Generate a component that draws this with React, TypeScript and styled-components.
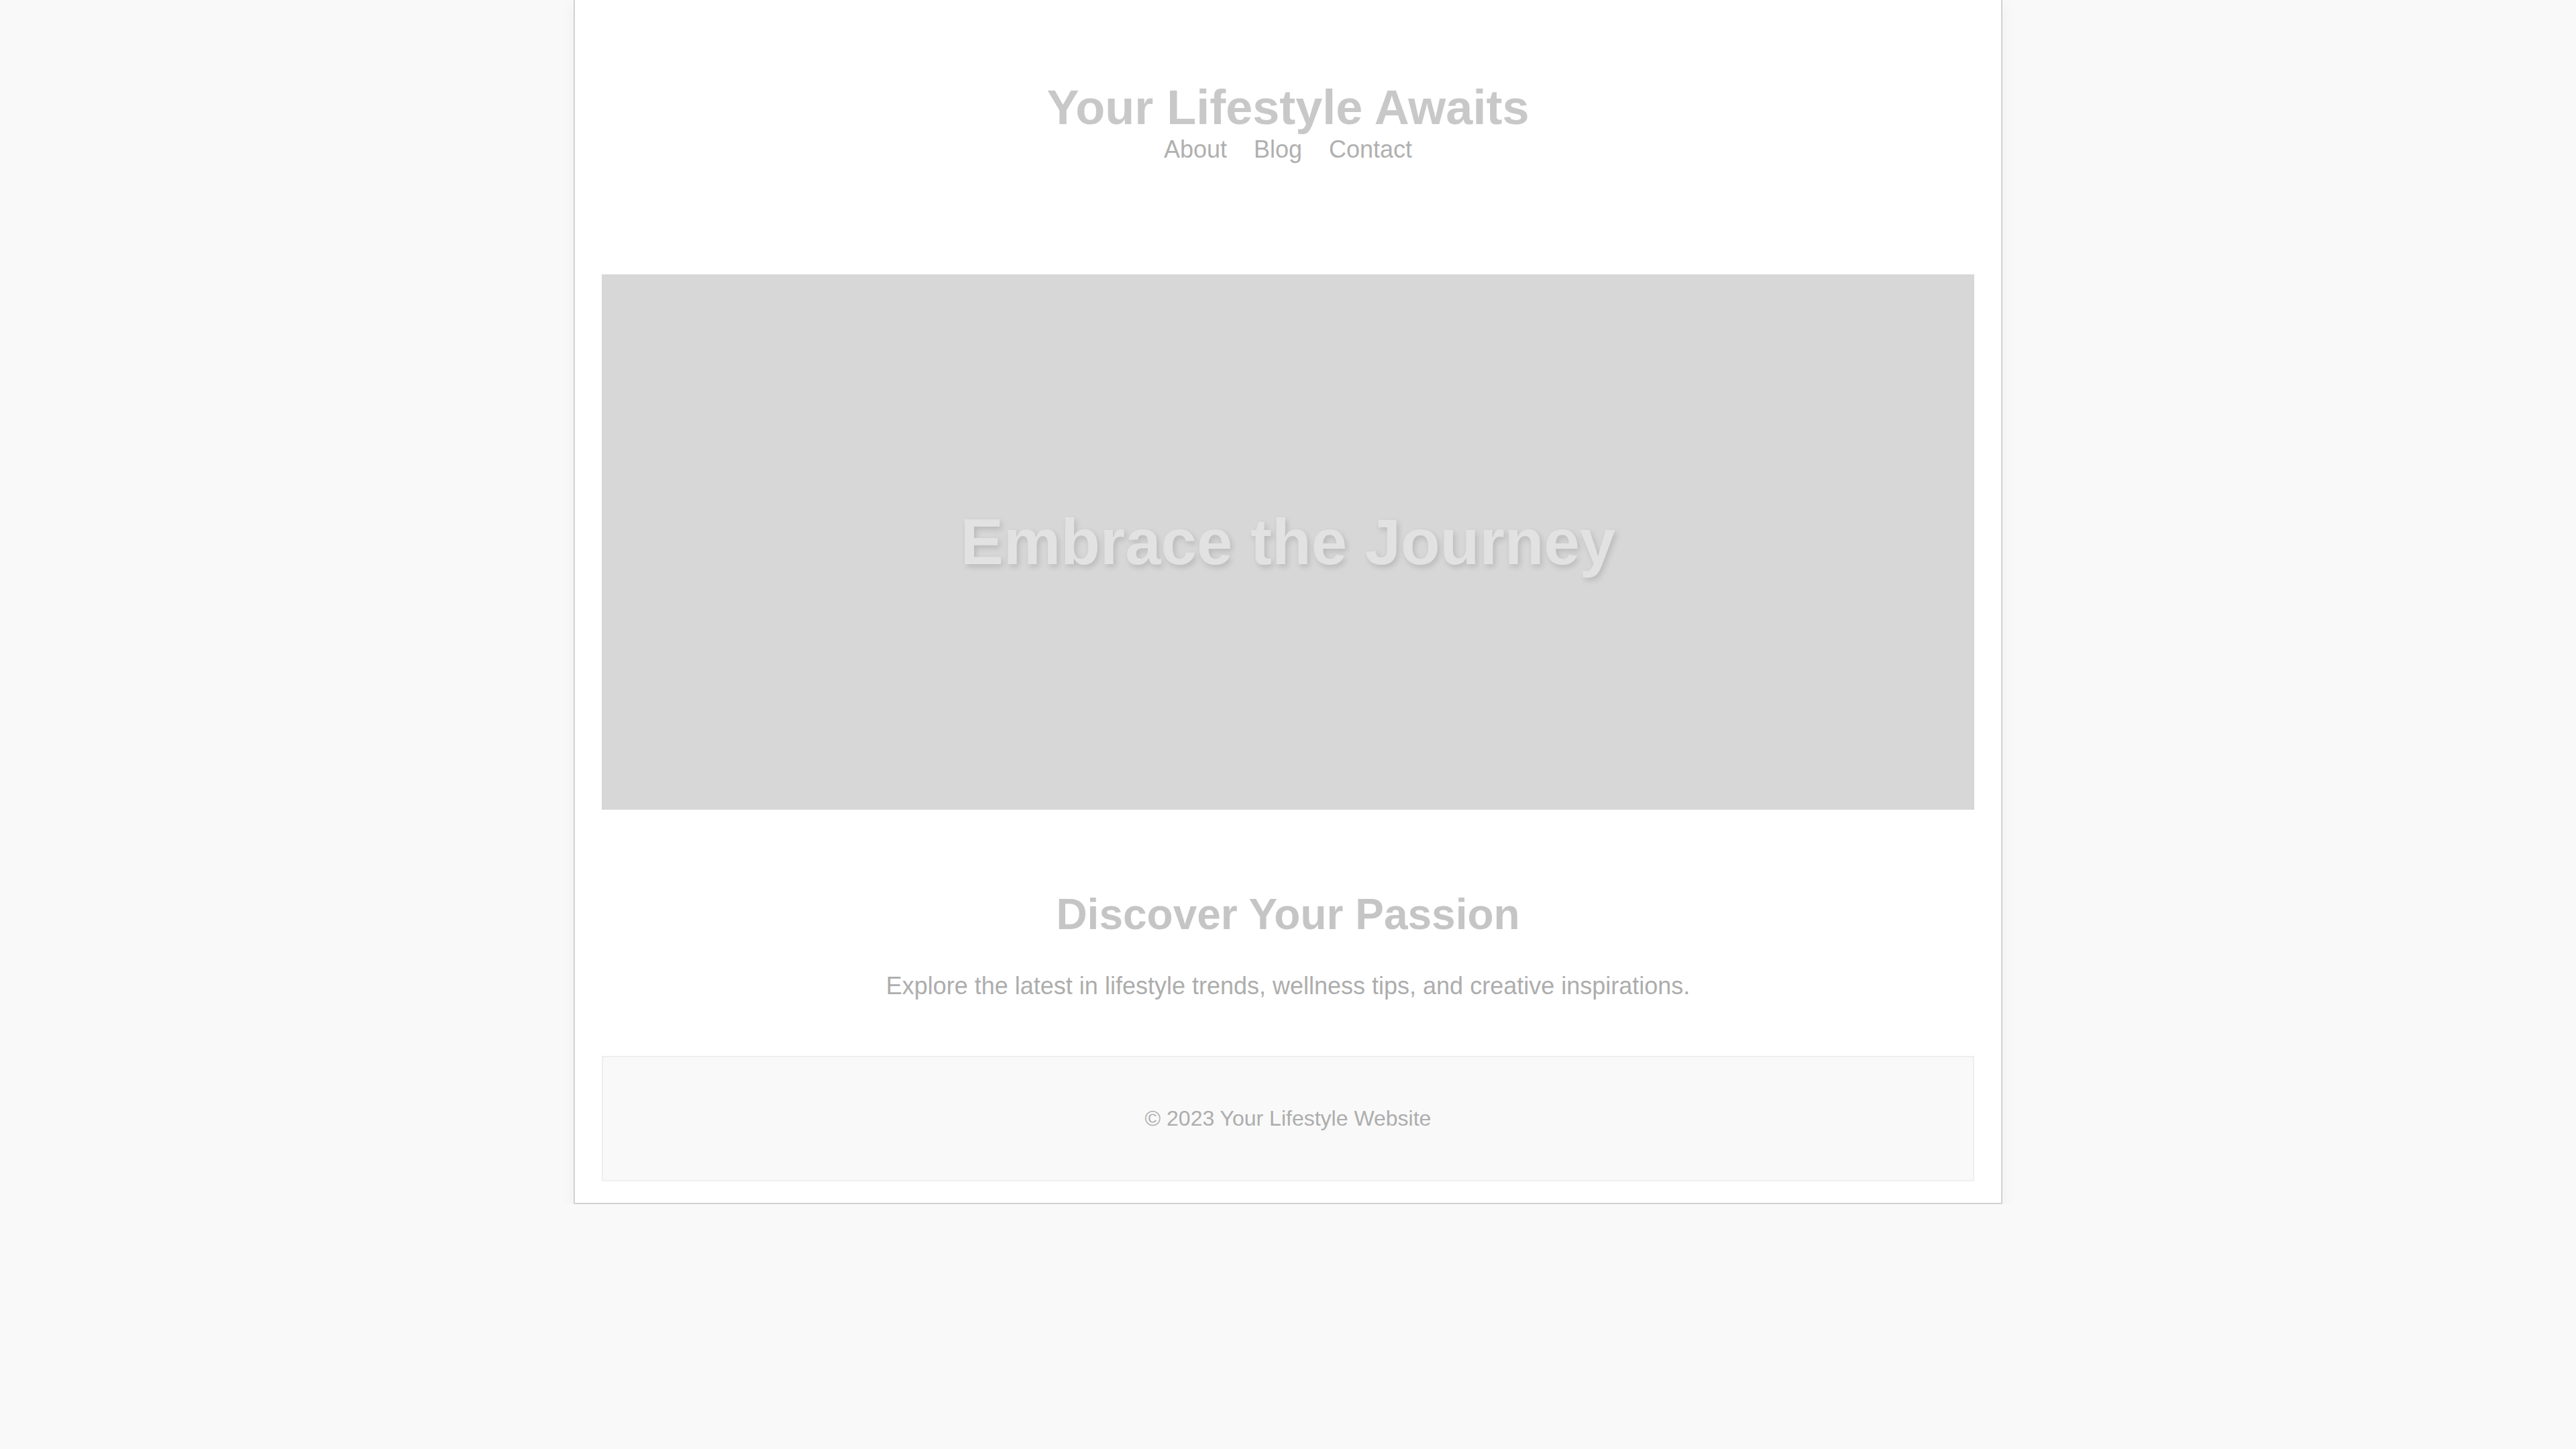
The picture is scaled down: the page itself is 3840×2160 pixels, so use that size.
import React from "react";
import styled, { createGlobalStyle } from "styled-components";

const GlobalStyle = createGlobalStyle`
  html, body {
    margin: 0;
    padding: 0;
    background: #f9f9f9;
    font-family: "Liberation Sans", Arial, sans-serif;
  }
  * { box-sizing: border-box; }
`;

const Page = styled.div`
  width: 2130px;
  margin: 0 auto;
  background: #ffffff;
  border: 2px solid #d2d2d2;
  border-top: none;
  box-shadow: 0 6px 24px rgba(0, 0, 0, 0.05);
  padding: 0 40px 32px;
`;

const Header = styled.header`
  display: flex;
  flex-direction: column;
  align-items: center;
  padding-top: 119px;
  margin-bottom: 166px;
`;

const Title = styled.h1`
  margin: 0;
  font-size: 72px;
  line-height: 1.15;
  font-weight: 700;
  color: #c8c8c8;
  text-shadow: -2px -2px 0 rgba(255, 255, 255, 0.9);
`;

const Nav = styled.nav`
  display: flex;
  gap: 40px;
`;

const NavLink = styled.a`
  font-size: 36px;
  line-height: 1.15;
  color: #b0b0b0;
  text-decoration: none;
`;

const Hero = styled.section`
  height: 798px;
  background: #d7d7d7;
  display: flex;
  align-items: center;
  justify-content: center;
`;

const HeroTitle = styled.h2`
  margin: 0;
  font-size: 96px;
  line-height: 1.15;
  font-weight: 700;
  color: #e2e2e2;
  text-shadow: 3px 4px 8px rgba(0, 0, 0, 0.14);
`;

const Intro = styled.section`
  display: flex;
  flex-direction: column;
  align-items: center;
  padding-top: 120px;
  margin-bottom: 84px;
`;

const SectionTitle = styled.h2`
  margin: 0 0 48px;
  font-size: 64px;
  line-height: 1.15;
  font-weight: 700;
  color: #c5c5c5;
`;

const Lead = styled.p`
  margin: 0;
  font-size: 36px;
  line-height: 1.15;
  color: #adadad;
`;

const Footer = styled.footer`
  height: 187px;
  background: #f9f9f9;
  border: 2px solid #efefef;
  display: flex;
  align-items: center;
  justify-content: center;
`;

const FooterText = styled.p`
  margin: 0;
  font-size: 32px;
  line-height: 1.15;
  color: #adadad;
`;

export default function App() {
  return (
    <>
      <GlobalStyle />
      <Page>
        <Header>
          <Title>Your Lifestyle Awaits</Title>
          <Nav>
            <NavLink href="#">About</NavLink>
            <NavLink href="#">Blog</NavLink>
            <NavLink href="#">Contact</NavLink>
          </Nav>
        </Header>
        <Hero>
          <HeroTitle>Embrace the Journey</HeroTitle>
        </Hero>
        <Intro>
          <SectionTitle>Discover Your Passion</SectionTitle>
          <Lead>
            Explore the latest in lifestyle trends, wellness tips, and creative
            inspirations.
          </Lead>
        </Intro>
        <Footer>
          <FooterText>© 2023 Your Lifestyle Website</FooterText>
        </Footer>
      </Page>
    </>
  );
}
